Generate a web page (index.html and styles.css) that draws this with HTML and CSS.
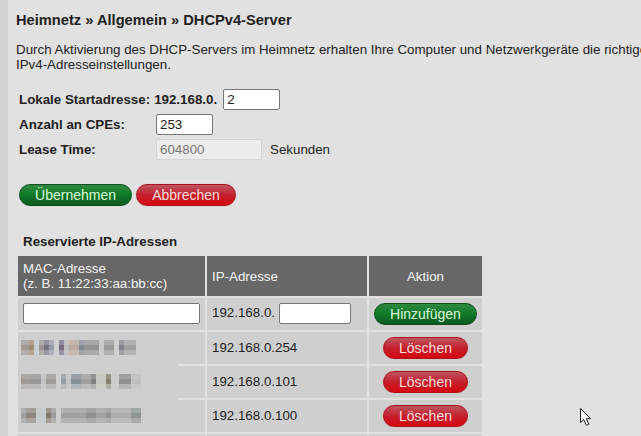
FILE: index.html
```html
<!DOCTYPE html>
<html lang="de">
<head>
    <meta charset="UTF-8">
    <title>DHCPv4-Server</title>
    <link rel="stylesheet" href="styles.css">
</head>
<body>
    <div id="content">
        <h1>Heimnetz » Allgemein » DHCPv4-Server</h1>
        <p class="intro">Durch Aktivierung des DHCP-Servers im Heimnetz erhalten Ihre Computer und Netzwerkgeräte die richtigen<br>IPv4-Adresseinstellungen.</p>

        <div class="form">
            <div class="formRow">
                <label class="startLabel">Lokale Startadresse:</label>
                <b class="prefix">192.168.0.</b>
                <input class="field small" type="text" value="2">
            </div>
            <div class="formRow">
                <label>Anzahl an CPEs:</label>
                <input class="field small" type="text" value="253">
            </div>
            <div class="formRow">
                <label>Lease Time:</label>
                <input class="field lease" type="text" value="604800" disabled>
                <span class="unit">Sekunden</span>
            </div>
        </div>

        <div class="actions">
            <button class="btn green apply">Übernehmen</button>
            <button class="btn red cancel">Abbrechen</button>
        </div>

        <h2>Reservierte IP-Adressen</h2>
        <table>
            <tr>
                <th class="mac">MAC-Adresse<br>(z. B. 11:22:33:aa:bb:cc)</th>
                <th class="ip">IP-Adresse</th>
                <th class="act">Aktion</th>
            </tr>
            <tr>
                <td class="mac"><input class="field macField" type="text"></td>
                <td class="ip">192.168.0. <input class="field ipField" type="text"></td>
                <td class="act"><button class="btn green add">Hinzufügen</button></td>
            </tr>
            <tr>
                <td class="mac"><div class="smudge"><div class="blur a"></div></div></td>
                <td class="ip">192.168.0.254</td>
                <td class="act"><button class="btn red del">Löschen</button></td>
            </tr>
            <tr>
                <td class="mac"><div class="smudge joined"><div class="blur b"></div></div></td>
                <td class="ip">192.168.0.101</td>
                <td class="act"><button class="btn red del">Löschen</button></td>
            </tr>
            <tr>
                <td class="mac"><div class="smudge joined"><div class="blur c"></div></div></td>
                <td class="ip">192.168.0.100</td>
                <td class="act"><button class="btn red del">Löschen</button></td>
            </tr>
            <tr>
                <td class="mac"></td>
                <td class="ip"></td>
                <td class="act"></td>
            </tr>
        </table>
    </div>

    <svg class="cursor" width="14" height="20" viewBox="0 0 14 20">
        <path d="M1.5 1.5 V15.5 L4.8 12.6 L7.4 18.4 L9.8 17.2 L7.3 11.8 L11.6 11.6 Z" fill="#fff" stroke="#222" stroke-width="1"/>
    </svg>
</body>
</html>
```

FILE: styles.css
```css
html, body {
    margin: 0;
    height: 100%;
    overflow: hidden;
}
body {
    background-color: #e1e1e1;
    font-family: "Liberation Sans", Arial, sans-serif;
    color: #222;
    position: relative;
}
#content {
    height: 100%;
    overflow: hidden;
    box-sizing: border-box;
    border-left: 8px solid #d2d2d2;
    padding: 12px 0 0 8px;
}
h1 {
    font-size: 14.67px;
    line-height: 17px;
    margin: 0 0 13px 0;
}
.intro {
    font-size: 13.33px;
    line-height: 15px;
    margin: 0 0 15px 0;
    white-space: nowrap;
}
.form {
    padding-left: 3px;
}
.formRow {
    display: flex;
    align-items: center;
    height: 25px;
    font-size: 13.33px;
}
.formRow label {
    font-weight: bold;
    width: 137px;
}
.formRow .startLabel {
    width: auto;
    margin-right: 4px;
}
.prefix {
    margin-right: 6px;
}
.field {
    box-sizing: border-box;
    height: 21px;
    padding: 0 3px;
    background: #fff;
    border: 1px solid #777;
    border-radius: 2px;
    font: 13.33px "Liberation Sans", Arial, sans-serif;
    color: #222;
    margin: 0;
}
.small {
    width: 57px;
}
.lease {
    width: 106px;
    background: #ececec;
    border-color: #d4d4d4;
    color: #777;
    margin-right: 8px;
}
.actions {
    display: flex;
    gap: 4px;
    margin: 22px 0 0 3px;
}
.btn {
    box-sizing: border-box;
    height: 22px;
    padding: 0;
    border: 0;
    border-radius: 11px;
    font: 14px "Liberation Sans", Arial, sans-serif;
}
.green {
    background: linear-gradient(#2f8a40, #0f7a28 50%, #0b5a1e);
    border: 1px solid #0c4f1c;
    color: #dcf8dc;
}
.red {
    background: linear-gradient(#bd5660, #c4202c 50%, #d6060f);
    border: 1px solid #a8141e;
    box-shadow: 0 0 1px #f08a8a;
    color: #fbdede;
}
.apply {
    width: 113px;
}
.cancel {
    width: 100px;
}
h2 {
    font-size: 13.33px;
    line-height: 15px;
    margin: 28px 0 5px 7px;
}
table {
    border-collapse: separate;
    border-spacing: 2px;
    font-size: 13.33px;
}
th {
    background-color: #676767;
    color: #f4f4f4;
    height: 40px;
    padding: 0;
    font-weight: normal;
    line-height: 15px;
    text-align: left;
}
th.act {
    text-align: center;
}
td {
    background-color: #cfcfcf;
    box-sizing: border-box;
    height: 32px;
    padding: 0 0 2px 0;
}
.mac {
    width: 187px;
    padding-left: 5px;
    box-sizing: border-box;
}
.ip {
    width: 160px;
    padding-left: 5px;
    box-sizing: border-box;
}
.act {
    width: 113px;
    text-align: center;
}
td.act {
    padding: 0;
}
.macField {
    width: 177px;
    display: block;
}
.ipField {
    width: 72px;
    vertical-align: middle;
}
.add {
    width: 103px;
}
.del {
    width: 85px;
}
td.mac {
    padding: 0;
}
td.mac .macField {
    margin: 0 0 2px 5px;
}
/* geschwaerzte MAC-Adressen, Mosaik wie im Original */
.smudge {
    width: 160px;
    height: 32px;
    display: flex;
    align-items: center;
}
.joined {
    box-shadow: 0 -2px 0 #cfcfcf;
}
.blur {
    height: 15px;
    margin: 0 0 2px 3px;
    filter: blur(0.4px);
}
.a {
    width: 115px;
    background:
        linear-gradient(rgba(207,207,207,.35) 0 5px, transparent 5px 10px, rgba(207,207,207,.4) 10px 15px),
        linear-gradient(90deg, #a09a94 0 8px, #a08e70 8px 13px, #c4ced4 13px 18px, #9c9696 18px 23px, #767280 23px 28px, #989ca6 28px 33px, #d0d0d0 33px 38px, #766e80 38px 43px, #bcbcbc 43px 48px, #bcaaa0 48px 58px, #808890 58px 63px, #929292 63px 78px, #c8ccc8 78px 83px, #9a9a9a 83px 93px, #d0d0d0 93px 98px, #80808a 98px 103px, #a0a0a0 103px 115px);
}
.b {
    width: 120px;
    background:
        linear-gradient(rgba(207,207,207,.25) 0 5px, transparent 5px 10px, rgba(207,207,207,.6) 10px 15px),
        linear-gradient(90deg, #a09a94 0 10px, #989898 10px 20px, #c4c4c4 20px 25px, #a09c98 25px 35px, #d0d0d0 35px 40px, #989ca0 40px 45px, #c4c4c4 45px 50px, #889098 50px 60px, #a0a0a0 60px 70px, #808080 70px 75px, #c8c8c0 75px 85px, #847f6e 85px 90px, #cccccc 90px 98px, #909090 98px 110px, #c0c0c0 110px 120px);
}
.c {
    width: 120px;
    background:
        linear-gradient(rgba(207,207,207,.3) 0 5px, transparent 5px 10px, rgba(207,207,207,.4) 10px 15px),
        linear-gradient(90deg, #a0a0a0 0 5px, #908880 5px 15px, #c4ccd0 15px 25px, #847c70 25px 30px, #9c9ca0 30px 35px, #cfcfcf 35px 40px, #a0a0a0 40px 65px, #909090 65px 75px, #a2a2a2 75px 85px, #949494 85px 90px, #acacac 90px 110px, #909494 110px 120px);
}
.cursor {
    position: absolute;
    left: 579px;
    top: 407px;
}
```
